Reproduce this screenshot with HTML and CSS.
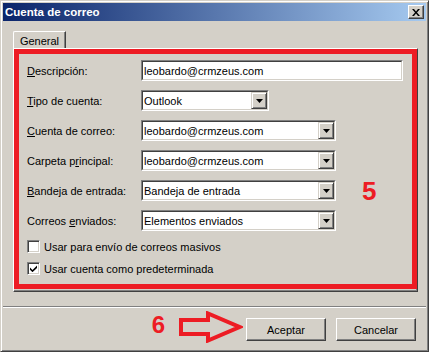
FILE: index.html
```html
<!DOCTYPE html>
<html lang="es">
<head>
    <meta charset="UTF-8">
    <meta name="viewport" content="width=device-width, initial-scale=1.0">
    <title>Cuenta de correo</title>
    <link rel="stylesheet" href="styles.css">
</head>
<body>
    <div class="window">
        <div class="titlebar">
            <span class="title">Cuenta de correo</span>
            <div class="close-btn">
                <svg width="8" height="7" viewBox="0 0 8 7"><path d="M0 0h2l2 2.4L6 0h2L5 3.5 8 7H6L4 4.6 2 7H0l3-3.5z" fill="#000"/></svg>
            </div>
        </div>

        <div class="content">
            <div class="tabs">
                <div class="tab">General</div>
            </div>
            <div class="panel">
                <div class="highlight">
                    <div class="row">
                        <span class="label"><u>D</u>escripción:</span>
                        <div class="field field-wide"><div class="field-inner"><span class="value">leobardo@crmzeus.com</span></div></div>
                    </div>
                    <div class="row">
                        <span class="label"><u>T</u>ipo de cuenta:</span>
                        <div class="field field-short"><div class="field-inner"><span class="value">Outlook</span><span class="drop"><svg width="7" height="4" viewBox="0 0 7 4"><path d="M0 0h7L3.5 4z" fill="#000"/></svg></span></div></div>
                    </div>
                    <div class="row">
                        <span class="label"><u>C</u>uenta de correo:</span>
                        <div class="field field-mid"><div class="field-inner"><span class="value">leobardo@crmzeus.com</span><span class="drop"><svg width="7" height="4" viewBox="0 0 7 4"><path d="M0 0h7L3.5 4z" fill="#000"/></svg></span></div></div>
                    </div>
                    <div class="row">
                        <span class="label">Carpeta p<u>r</u>incipal:</span>
                        <div class="field field-mid"><div class="field-inner"><span class="value">leobardo@crmzeus.com</span><span class="drop"><svg width="7" height="4" viewBox="0 0 7 4"><path d="M0 0h7L3.5 4z" fill="#000"/></svg></span></div></div>
                    </div>
                    <div class="row">
                        <span class="label"><u>B</u>andeja de entrada:</span>
                        <div class="field field-mid"><div class="field-inner"><span class="value">Bandeja de entrada</span><span class="drop"><svg width="7" height="4" viewBox="0 0 7 4"><path d="M0 0h7L3.5 4z" fill="#000"/></svg></span></div></div>
                    </div>
                    <div class="row">
                        <span class="label">Correos <u>e</u>nviados:</span>
                        <div class="field field-mid"><div class="field-inner"><span class="value">Elementos enviados</span><span class="drop"><svg width="7" height="4" viewBox="0 0 7 4"><path d="M0 0h7L3.5 4z" fill="#000"/></svg></span></div></div>
                    </div>

                    <div class="checks">
                        <div class="check">
                            <span class="box"></span>
                            <span>Usar para envío de correos masivos</span>
                        </div>
                        <div class="check">
                            <span class="box"><svg width="7" height="7" viewBox="0 0 7 7"><path d="M0 2.5L2.5 5 7 0.5V3L2.5 7.2 0 4.7z" fill="#000"/></svg></span>
                            <span>Usar cuenta como predeterminada</span>
                        </div>
                    </div>

                    <span class="note note-5">5</span>
                </div>
            </div>
        </div>

        <div class="separator"></div>

        <div class="actions">
            <span class="note note-6">6</span>
            <svg class="arrow" width="64" height="32" viewBox="0 0 64 32">
                <path d="M2 9H29V2.5L60.5 16 29 29.5V23H2z" fill="none" stroke="#ed1c24" stroke-width="4" stroke-linejoin="miter"/>
            </svg>
            <button class="btn">Aceptar</button>
            <button class="btn">Cancelar</button>
        </div>
    </div>
</body>
</html>
```

FILE: styles.css
```css
:root {
    --face: #d4d0c8;
    --shadow: #808080;
    --dark: #404040;
    --light: #ffffff;
    --mark: #ed1c24;
}

* {
    box-sizing: border-box;
    margin: 0;
    padding: 0;
}

body {
    width: 429px;
    height: 352px;
    overflow: hidden;
    font-family: 'Liberation Sans', Arial, sans-serif;
    font-size: 11px;
    color: #000;
    background-color: var(--face);
}

.window {
    width: 429px;
    height: 352px;
    display: flex;
    flex-direction: column;
    padding: 2px;
    background-color: var(--face);
    border: 1px solid;
    border-color: var(--face) var(--dark) var(--dark) var(--face);
    box-shadow: inset 1px 1px var(--light), inset -1px -1px var(--shadow);
}

/* Title bar */
.titlebar {
    height: 18px;
    display: flex;
    align-items: center;
    justify-content: space-between;
    padding: 0 2px;
    background: linear-gradient(to right, #0a246a, #a6caf0);
}

.title {
    color: #fff;
    font-weight: bold;
    font-size: 11.5px;
}

.close-btn {
    width: 16px;
    height: 14px;
    display: flex;
    align-items: center;
    justify-content: center;
    background-color: var(--face);
    border: 1px solid;
    border-color: var(--light) var(--dark) var(--dark) var(--light);
    box-shadow: inset -1px -1px var(--shadow);
}

/* Tab area */
.content {
    padding: 10px 8px 0 10px;
}

.tabs {
    display: flex;
    position: relative;
    z-index: 1;
}

.tab {
    width: 53px;
    height: 17px;
    display: flex;
    align-items: center;
    justify-content: center;
    background-color: var(--face);
    border-top: 1px solid var(--light);
    border-left: 1px solid var(--light);
    border-right: 1px solid var(--dark);
    border-top-left-radius: 2px;
    box-shadow: inset -1px 0 var(--shadow);
    padding-top: 1px;
}

.panel {
    width: 405px;
    height: 244px;
    padding-bottom: 2px;
    border: 1px solid;
    border-color: var(--light) var(--dark) var(--dark) var(--light);
    box-shadow: inset -1px -1px var(--shadow);
}

.highlight {
    position: relative;
    height: 240px;
    border: 5px solid var(--mark);
    padding: 6px 0 0 8px;
}

/* Form rows */
.row {
    display: flex;
    align-items: center;
    height: 21px;
    margin-bottom: 9px;
}

.label {
    width: 114px;
    flex-shrink: 0;
}

.field {
    height: 21px;
    border: 1px solid;
    border-color: var(--shadow) var(--light) var(--light) var(--shadow);
}

.field-wide { width: 262px; }
.field-short { width: 128px; }
.field-mid { width: 195px; }

.field-inner {
    height: 100%;
    display: flex;
    align-items: center;
    justify-content: space-between;
    background-color: #fff;
    border: 1px solid;
    border-color: var(--dark) var(--face) var(--face) var(--dark);
}

.value {
    padding-left: 1px;
    white-space: nowrap;
}

.drop {
    width: 16px;
    height: 17px;
    display: flex;
    align-items: center;
    justify-content: center;
    background-color: var(--face);
    border: 1px solid;
    border-color: var(--face) var(--dark) var(--dark) var(--face);
    box-shadow: inset 1px 1px var(--light), inset -1px -1px var(--shadow);
}

/* Checkboxes */
.checks {
    display: flex;
    flex-direction: column;
    gap: 9px;
    margin-top: 2px;
}

.check {
    display: flex;
    align-items: center;
    gap: 4px;
    height: 13px;
}

.box {
    width: 13px;
    height: 13px;
    display: flex;
    align-items: center;
    justify-content: center;
    background-color: #fff;
    border: 1px solid;
    border-color: var(--shadow) var(--light) var(--light) var(--shadow);
    box-shadow: inset 1px 1px var(--dark), inset -1px -1px var(--face);
}

/* Red annotations */
.note {
    color: var(--mark);
    font-weight: bold;
    line-height: 1;
}

.note-5 {
    position: absolute;
    left: 343px;
    top: 124px;
    font-size: 26px;
}

/* Bottom */
.separator {
    height: 2px;
    margin-top: 14px;
    border-top: 1px solid var(--shadow);
    border-bottom: 1px solid var(--light);
}

.actions {
    display: flex;
    justify-content: flex-end;
    align-items: flex-start;
    margin-top: 10px;
    padding-right: 10px;
}

.note-6 {
    font-size: 24px;
    margin-top: -5px;
    margin-right: 14px;
}

.arrow {
    margin-top: -7px;
    margin-right: 3px;
}

.btn {
    width: 80px;
    height: 23px;
    font-family: inherit;
    font-size: 11px;
    color: #000;
    background-color: var(--face);
    border: 1px solid;
    border-color: var(--light) var(--dark) var(--dark) var(--light);
    box-shadow: inset -1px -1px var(--shadow);
}

.btn + .btn {
    margin-left: 10px;
}
```
